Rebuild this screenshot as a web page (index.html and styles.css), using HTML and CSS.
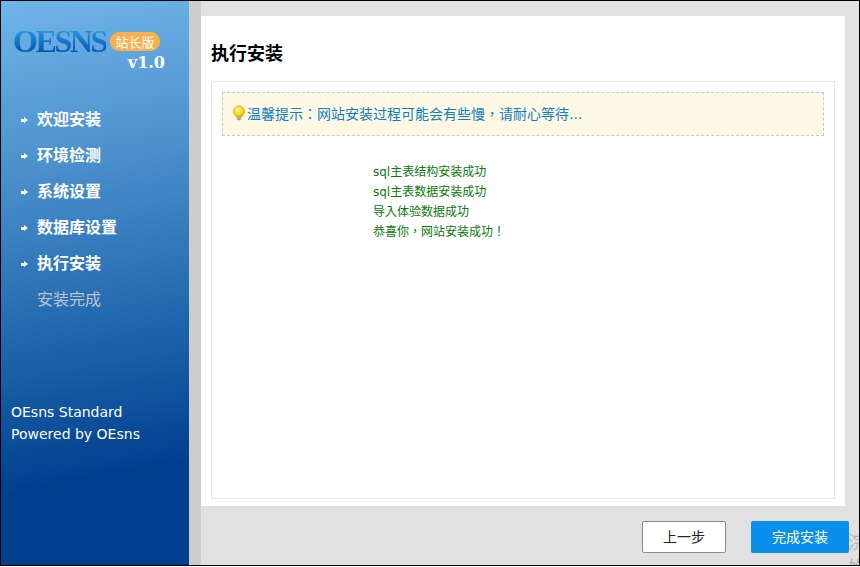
FILE: index.html
```html
<!DOCTYPE html>
<html lang="zh-CN">
<head>
    <meta charset="UTF-8">
    <title>OEsns 安装</title>
    <link rel="stylesheet" href="styles.css">
</head>
<body>
    <div class="install-frame">
        <div class="sidebar">
            <div class="logo">
                <div class="logo-row">
                    <span class="logo-name">OESNS</span>
                    <span class="logo-badge">站长版</span>
                </div>
                <div class="logo-version">v1.0</div>
            </div>
            <ul class="steps">
                <li class="step done">欢迎安装</li>
                <li class="step done">环境检测</li>
                <li class="step done">系统设置</li>
                <li class="step done">数据库设置</li>
                <li class="step done">执行安装</li>
                <li class="step">安装完成</li>
            </ul>
            <div class="sidebar-foot">
                <p>OEsns Standard</p>
                <p>Powered by OEsns</p>
            </div>
        </div>
        <div class="main">
            <div class="panel">
                <h2 class="panel-title">执行安装</h2>
                <div class="panel-box">
                    <div class="notice" lang="zh-TW">
                        <svg class="notice-icon" width="14" height="16" viewBox="0 0 14 16">
                            <defs>
                                <radialGradient id="bulb" cx="40%" cy="35%" r="70%">
                                    <stop offset="0" stop-color="#fff8a8"/>
                                    <stop offset="0.6" stop-color="#ffd91a"/>
                                    <stop offset="1" stop-color="#e0a000"/>
                                </radialGradient>
                            </defs>
                            <path d="M7 1a5.400 5.400 0 0 0-5.400 5.400c0 2 1.200 3 2 4 .4.500.6 1 .6 1.600h5.600c0-.6.2-1.100.6-1.600.8-1 2-2 2-4A5.400 5.400 0 0 0 7 1z" fill="url(#bulb)" stroke="#d9a300" stroke-width=".8"/>
                            <path d="M4.800 12.600h4.400v1.400l-1 1.200H5.800l-1-1.200z" fill="#a0a0a0"/>
                        </svg>
                        <span>温馨提示：网站安装过程可能会有些慢，请耐心等待...</span>
                    </div>
                    <div class="log" lang="zh-TW">
                        <p>sql主表结构安装成功</p>
                        <p>sql主表数据安装成功</p>
                        <p>导入体验数据成功</p>
                        <p>恭喜你，网站安装成功！</p>
                    </div>
                </div>
            </div>
            <div class="actions">
                <a class="btn btn-prev">上一步</a>
                <a class="btn btn-next">完成安装</a>
            </div>
        </div>
        <div class="edge-text">浣<br>妳</div>
    </div>
</body>
</html>
```

FILE: styles.css
```css
html, body {
    margin: 0;
    padding: 0;
    background-color: #fff;
}

body {
    font-family: "DejaVu Sans", "Noto Sans CJK TC", sans-serif;
    font-size: 12px;
    height: 567px;
    overflow: hidden;
}

p {
    margin: 0;
}

.install-frame {
    position: relative;
    display: flex;
    box-sizing: border-box;
    width: 860px;
    height: 566px;
    border: 1px solid #000;
    background-color: #e1e1e1;
    overflow: hidden;
}

.sidebar {
    display: flex;
    flex-direction: column;
    width: 188px;
    border-right: 12px solid #cdcdcd;
    background: linear-gradient(170deg, #6fb5e8 0%, #4a8fcb 30%, #1d63aa 60%, #003f8e 83%, #003f8e 100%);
}

.logo {
    padding: 24px 24px 0 12px;
}

.logo-row {
    display: flex;
    align-items: center;
    gap: 4px;
    height: 32px;
}

.logo-name {
    font-family: "Liberation Serif", serif;
    font-size: 32px;
    font-weight: bold;
    line-height: 32px;
    letter-spacing: -2.4px;
    background: linear-gradient(180deg, #2a96e0 15%, #0058b0 85%);
    -webkit-background-clip: text;
    background-clip: text;
    color: transparent;
}

.logo-badge {
    width: 50px;
    height: 19px;
    margin-top: 1px;
    border-radius: 9px;
    background-color: #fbb04f;
    color: #fff;
    font-family: "Noto Sans CJK SC", sans-serif;
    font-size: 13px;
    line-height: 19px;
    text-align: center;
}

.logo-version {
    font-family: "DejaVu Serif", serif;
    font-size: 16px;
    font-weight: bold;
    line-height: 18px;
    margin-top: -3px;
    color: #fff;
    text-align: right;
}

.steps {
    list-style: none;
    margin: 30px 0 0;
    padding: 0;
}

.step {
    position: relative;
    height: 36px;
    padding-left: 36px;
    font-family: "Liberation Serif", "Noto Sans CJK SC", sans-serif;
    font-size: 16px;
    line-height: 36px;
    color: #b9c5d2;
}

.step.done {
    color: #fff;
    font-weight: bold;
}

.step.done::before {
    content: "";
    position: absolute;
    left: 20px;
    top: 17px;
    width: 3px;
    height: 3px;
    background-color: #fff;
}

.step.done::after {
    content: "";
    position: absolute;
    left: 23px;
    top: 15px;
    border-left: 4px solid #fff;
    border-top: 3.500px solid transparent;
    border-bottom: 3.500px solid transparent;
}

.sidebar-foot {
    margin-top: 83px;
    padding-left: 10px;
    font-size: 14px;
    line-height: 22px;
    color: #fff;
}

.main {
    flex: 1;
    display: flex;
    flex-direction: column;
    min-width: 0;
}

.panel {
    box-sizing: border-box;
    width: 644px;
    height: 490px;
    margin-top: 15px;
    padding: 0 10px 7px;
    background-color: #fff;
    display: flex;
    flex-direction: column;
}

.panel-title {
    margin: 0;
    height: 65px;
    font-family: "Noto Sans CJK SC", sans-serif;
    font-size: 18px;
    font-weight: bold;
    line-height: 72px;
    color: #000;
}

.panel-box {
    flex: 1;
    padding: 10px;
    border: 1px solid #e7e7e7;
}

.notice {
    display: flex;
    align-items: center;
    gap: 1px;
    box-sizing: border-box;
    height: 44px;
    padding: 0 0 2px 9px;
    border: 1px dashed #c9c9c9;
    background-color: #fef8e5;
    color: #0f7fc4;
    font-size: 14px;
}

.log {
    margin: 26px 0 0 151px;
    color: #0a7a0a;
    line-height: 20px;
}

.actions {
    display: flex;
    gap: 25px;
    padding: 15px 0 0 441px;
}

.btn {
    box-sizing: border-box;
    height: 32px;
    font-size: 14px;
    line-height: 30px;
    text-align: center;
    border-radius: 2px;
}

.btn-prev {
    width: 84px;
    border: 1px solid #8c8c8c;
    background-color: #fff;
    color: #222;
}

.btn-next {
    width: 98px;
    line-height: 32px;
    background-color: #0a90ec;
    color: #fff;
}

/* cut off by the window edge */
.edge-text {
    position: absolute;
    left: 847px;
    top: 529px;
    font-size: 18px;
    line-height: 25px;
    color: #b4b4b4;
}
```
